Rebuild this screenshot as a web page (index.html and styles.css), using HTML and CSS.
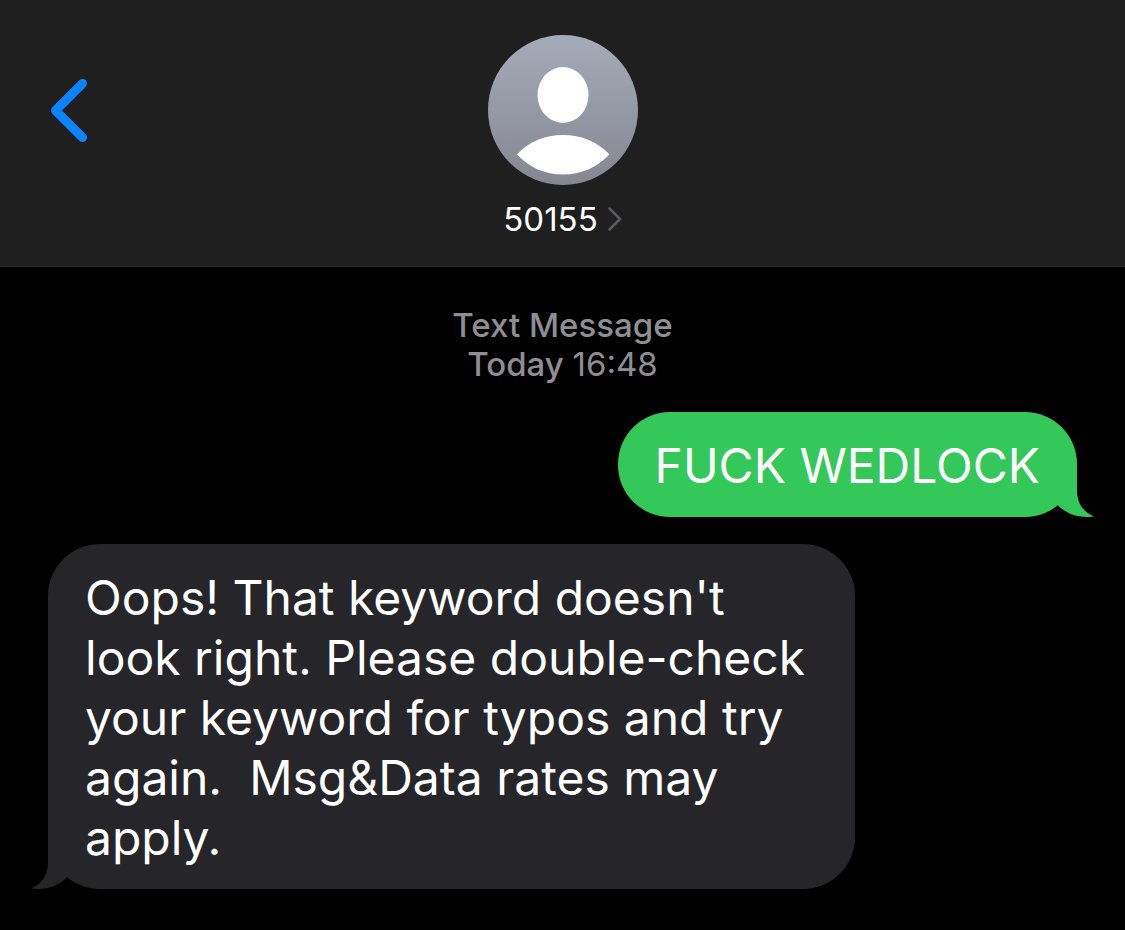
FILE: index.html
```html
<!DOCTYPE html>
<html lang="en">
<head>
  <meta charset="UTF-8" />
  <meta name="viewport" content="width=device-width, initial-scale=1" />
  <title>50155</title>
  <link rel="stylesheet" href="styles.css">
</head>
<body>
  <header class="header">
    <button type="button" class="back-btn" aria-label="Back">
      <svg width="38" height="64" viewBox="0 0 38 64" aria-hidden="true">
        <path d="M32.5 4.500 5.500 31.500 32.5 58.500" fill="none" stroke="#0a84ff" stroke-width="9" stroke-linecap="round" stroke-linejoin="round" />
      </svg>
    </button>

    <button type="button" class="contact">
      <svg class="avatar" width="150" height="150" viewBox="0 0 150 150" aria-hidden="true">
        <defs>
          <linearGradient id="avatar-bg" x1="0" y1="0" x2="0" y2="1">
            <stop offset="0" stop-color="#a6abb9" />
            <stop offset="1" stop-color="#848791" />
          </linearGradient>
        </defs>
        <circle cx="75" cy="75" r="75" fill="url(#avatar-bg)" />
        <ellipse cx="75" cy="60" rx="25.500" ry="28" fill="#fff" />
        <path d="M29 119.500C40 107 57 100 75 100s35 7 46.500 19.500C109 132.500 93 139.500 75 139.500S41 132.500 29 119.500z" fill="#fff" />
      </svg>
      <span class="contact-name">
        50155
        <svg width="14" height="24" viewBox="0 0 14 24" aria-hidden="true">
          <path d="M1.500 1.500 12 12 1.500 22.500" fill="none" stroke="#5c5c60" stroke-width="2.500" stroke-linecap="round" stroke-linejoin="round" />
        </svg>
      </span>
    </button>
  </header>

  <main class="thread">
    <div class="stamp">
      Text Message<br>
      Today <time datetime="16:48">16:48</time>
    </div>

    <div class="bubble sent">
      FUCK WEDLOCK
      <svg class="tail" width="49" height="52" viewBox="0 0 49 52" aria-hidden="true">
        <path d="M0 0H32V25C32 38 38 47 49 51.500C35 53.500 22 49.500 12.500 40z" />
      </svg>
    </div>

    <div class="bubble received">
      Oops! That keyword doesn't look right. Please double-check your keyword for typos and try again.&nbsp; Msg&amp;Data rates may apply.
      <svg class="tail" width="49" height="52" viewBox="0 0 49 52" aria-hidden="true">
        <path d="M49 0H17V25C17 38 11 47 0 51.500C14 53.500 27 49.500 36.500 40z" />
      </svg>
    </div>
  </main>
</body>
</html>
```
FILE: styles.css
```css
body {
  margin: 0;
  font-family: Inter, "Liberation Sans", sans-serif;
  background-color: #000;
  color: #fff;
}

button {
  padding: 0;
  border: none;
  background: none;
  font: inherit;
  color: inherit;
  cursor: pointer;
}

/* top bar */
.header {
  display: grid;
  grid-template-columns: 1fr auto 1fr;
  align-items: start;
  padding: 35px 50px 27px;
  background-color: #1f1f1f;
  border-bottom: 1px solid #2a2a2b;
}

.back-btn {
  display: flex;
  align-items: center;
  justify-self: start;
  height: 152px;
}

.contact {
  display: flex;
  flex-direction: column;
  align-items: center;
  gap: 14px;
}

.contact-name {
  display: flex;
  align-items: center;
  gap: 10px;
  font-size: 33px;
  line-height: 40px;
}

/* messages */
.thread {
  display: flex;
  flex-direction: column;
  padding: 39px 48px;
}

.stamp {
  margin-bottom: 28px;
  text-align: center;
  font-size: 33px;
  font-weight: 500;
  line-height: 39px;
  color: #8e8e93;
}

.stamp time {
  font-weight: 400;
}

.bubble {
  position: relative;
  box-sizing: border-box;
  max-width: 807px;
  padding: 24px 37px 21px;
  border-radius: 52px;
  font-size: 48px;
  line-height: 60px;
}

.bubble + .bubble {
  margin-top: 27px;
}

.sent {
  align-self: flex-end;
  background-color: #34c759;
}

.received {
  align-self: flex-start;
  background-color: #262529;
}

.tail {
  position: absolute;
  bottom: 0;
}

.sent .tail {
  right: -17px;
  fill: #34c759;
}

.received .tail {
  left: -17px;
  fill: #262529;
}
```
